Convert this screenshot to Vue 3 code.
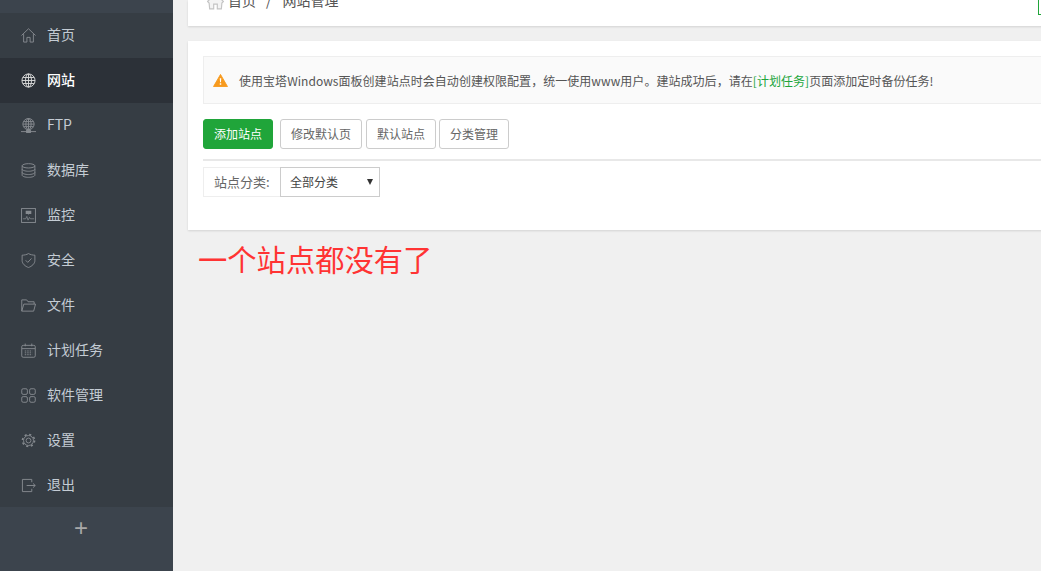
<script setup>
const items = [
  { label: '首页', icon: 'home' },
  { label: '网站', icon: 'globe', active: true },
  { label: 'FTP', icon: 'ftp' },
  { label: '数据库', icon: 'db' },
  { label: '监控', icon: 'monitor' },
  { label: '安全', icon: 'shield' },
  { label: '文件', icon: 'folder' },
  { label: '计划任务', icon: 'calendar' },
  { label: '软件管理', icon: 'grid' },
  { label: '设置', icon: 'gear' },
  { label: '退出', icon: 'exit' },
]
</script>

<template>
  <div class="page">
    <aside class="side">
      <div class="side-top"></div>
      <nav class="nav">
        <a v-for="it in items" :key="it.label" class="item" :class="{ active: it.active }">
          <svg class="ico" viewBox="0 0 16 16" fill="none" stroke="currentColor" stroke-width="1">
            <template v-if="it.icon === 'home'">
              <path d="M.5 8 8 .8 15.500 8M2.800 6.500V15H6.300V10H9.700V15H13.200V6.500" />
            </template>
            <template v-else-if="it.icon === 'globe'">
              <circle cx="8" cy="8" r="7" />
              <ellipse cx="8" cy="8" rx="3.200" ry="7" />
              <path d="M8 1V15M1 8H15M2.200 4.800H13.800M2.200 11.200H13.800" />
            </template>
            <template v-else-if="it.icon === 'ftp'">
              <circle cx="8" cy="6.500" r="6" />
              <ellipse cx="8" cy="6.500" rx="2.800" ry="6" />
              <path d="M8 .5V12.500M2 6.500H14M3 3.800H13M3 9.200H13M0 14.500H16" />
              <rect x="6" y="13" width="4" height="2.500" fill="currentColor" />
            </template>
            <template v-else-if="it.icon === 'db'">
              <ellipse cx="8" cy="3" rx="6.800" ry="2.300" />
              <path d="M1.200 3V13C1.200 14.300 4.500 15.300 8 15.300S14.800 14.300 14.800 13V3M1.200 6.500C1.200 7.800 4.500 8.800 8 8.800S14.800 7.800 14.800 6.500M1.200 10C1.200 11.300 4.500 12.300 8 12.300S14.800 11.300 14.800 10" />
            </template>
            <template v-else-if="it.icon === 'monitor'">
              <rect x=".6" y=".6" width="14.800" height="14.800" />
              <path d="M5 3H11V6.500H8.500L8 7.500 7.500 6.500H5Z" fill="currentColor" stroke="none" />
              <path d="M2 11.500H5L6.200 9 7.500 13 9 10 10 11.500H14" stroke-width=".8" />
            </template>
            <template v-else-if="it.icon === 'shield'">
              <path d="M8 .6C10 1.800 12.500 2.300 14.800 2.300V8C14.800 11.500 11.500 14.200 8 15.500 4.500 14.200 1.200 11.500 1.200 8V2.300C3.500 2.300 6 1.800 8 .6Z" />
              <path d="M5 7.800 7.200 10 11.200 5.800" />
            </template>
            <template v-else-if="it.icon === 'folder'">
              <path d="M.8 14V2H6L7.500 4H14V6.500M.8 14H13.500L15.500 6.500H3L.8 14Z" />
            </template>
            <template v-else-if="it.icon === 'calendar'">
              <rect x=".8" y="2.500" width="14.400" height="12.700" rx="1.500" />
              <path d="M1 6H15M4.500 .6V3.500M11.500 .6V3.500" />
              <path d="M4 8.500H12M4 10.500H12M4 12.500H12" stroke-dasharray="1.600 1" />
            </template>
            <template v-else-if="it.icon === 'grid'">
              <rect x=".8" y=".8" width="6" height="6" rx="1.500" />
              <rect x="9.200" y=".8" width="6" height="6" rx="1.500" />
              <rect x=".8" y="9.200" width="6" height="6" rx="1.500" />
              <rect x="9.200" y="9.200" width="6" height="6" rx="1.500" />
            </template>
            <template v-else-if="it.icon === 'gear'">
              <circle cx="8" cy="8" r="2.600" />
              <circle cx="8" cy="8" r="5.300" />
              <circle cx="8" cy="8" r="6.500" stroke-width="1.600" stroke-dasharray="2.300 2.800" />
            </template>
            <template v-else>
              <path d="M11.500 4.500V1.500H1.500V14.500H11.500V11.500M6 8H15.200M12.800 5.800 15.200 8 12.800 10.200" />
            </template>
          </svg>
          <span>{{ it.label }}</span>
        </a>
      </nav>
      <div class="side-add"><span>+</span></div>
    </aside>

    <main class="main">
      <section class="card crumb">
        <svg class="crumb-home" viewBox="0 0 16 16" fill="#f4f4f4" stroke="#c4c4c4" stroke-width="1.100">
          <path d="M.5 8 8 .8 15.500 8 14 9.500 13.500 15H9.700V10.500H6.300V15H2.500L2 9.500Z" />
        </svg>
        <span>首页</span>
        <span class="sep">/</span>
        <span>网站管理</span>
        <i class="green-mark"></i>
      </section>

      <section class="card panel">
        <div class="alert">
          <svg class="warn" viewBox="0 0 16 14">
            <path d="M8 0.500 15.500 13.500H.5Z" fill="#f79a1e" stroke="#f79a1e" stroke-linejoin="round" />
            <path d="M7.200 4.500H8.800L8.500 9H7.500ZM7.200 10H8.800V11.600H7.200Z" fill="#fff" />
          </svg>
          <span>使用宝塔Windows面板创建站点时会自动创建权限配置，统一使用www用户。建站成功后，请在<a class="link">[计划任务]</a>页面添加定时备份任务!</span>
        </div>
        <div class="buttons">
          <button class="btn primary">添加站点</button>
          <button class="btn wide">修改默认页</button>
          <button class="btn">默认站点</button>
          <button class="btn">分类管理</button>
        </div>
        <div class="filter">
          <span class="addon">站点分类:</span>
          <div class="select"><span>全部分类</span><i class="caret"></i></div>
        </div>
      </section>

      <p class="note">一个站点都没有了</p>
    </main>
  </div>
</template>

<style>
html, body { margin: 0; overflow: hidden; background: #f0f0f0; }
</style>

<style scoped>
.page {
  display: flex;
  width: 1041px;
  height: 571px;
  overflow: hidden;
  font-family: "Noto Sans CJK SC", "Noto Sans", sans-serif;
  font-size: 12px;
  color: #555;
}
.side {
  width: 173px;
  flex: none;
  display: flex;
  flex-direction: column;
  background: #363d44;
}
.side-top { height: 13px; background: #3c444d; }
.nav { display: flex; flex-direction: column; }
.item {
  height: 45px;
  box-sizing: border-box;
  padding: 0 0 3px 21px;
  display: flex;
  align-items: center;
  gap: 11px;
  color: #c4ccd4;
  font-size: 14px;
}
.item .ico { width: 15px; height: 15px; color: #868b90; flex: none; margin-top: 2px; }
.item.active { background: #2c3138; color: #fff; font-weight: 500; }
.item.active .ico { color: #d8d8d8; }
.side-add {
  flex: 1;
  background: #3c444d;
  color: #a8a8a8;
  text-align: center;
  font-size: 24px;
  line-height: 42px;
  font-family: "Liberation Sans", sans-serif;
  margin-top: -1px;
  padding-right: 11px;
}
.main {
  flex: 1;
  min-width: 0;
  padding-left: 15px;
  display: flex;
  flex-direction: column;
}
.card {
  background: #fff;
  width: 900px;
  box-shadow: 0 1px 2px rgba(0, 0, 0, .12);
}
.crumb {
  height: 26px;
  flex: none;
  position: relative;
  overflow: hidden;
  display: flex;
  align-items: flex-end;
  padding: 0 0 16px 19px;
  box-sizing: border-box;
  font-size: 14px;
  line-height: 20px;
  color: #555;
}
.crumb-home { width: 17px; height: 17px; margin-right: 4px; flex: none; }
.sep { margin: 0 11px 0 10px; }
.green-mark {
  position: absolute;
  left: 850px;
  top: -9px;
  width: 20px;
  height: 24px;
  border: 1px solid #20a53a;
  box-sizing: border-box;
}
.panel {
  margin-top: 15px;
  height: 189px;
  flex: none;
  padding: 15px;
  box-sizing: border-box;
}
.alert {
  height: 48px;
  box-sizing: border-box;
  border: 1px solid #eee;
  background: #fafafa;
  display: flex;
  align-items: center;
  padding-left: 9px;
  gap: 11px;
  color: #555;
  white-space: nowrap;
  font-size: 12px;
  letter-spacing: .04px;
}
.warn { width: 15px; height: 13px; flex: none; }
.link { color: #20a53a; }
.buttons {
  display: flex;
  gap: 3px;
  margin-top: 15px;
  padding-bottom: 10px;
  border-bottom: 2px solid #e8e8e8;
}
.btn {
  height: 30px;
  padding: 0 10px 2px;
  font: inherit;
  font-size: 12px;
  background: #fff;
  color: #666;
  border: 1px solid #ccc;
  border-radius: 3px;
}
.btn.primary {
  background: #20a53a;
  color: #fff;
  border-color: #20a53a;
  margin-right: 4px;
}
.btn.wide { margin-right: 1px; }
.filter { display: flex; margin-top: 6px; }
.addon {
  height: 30px;
  width: 77px;
  box-sizing: border-box;
  border: 1px solid #eee;
  border-right: 0;
  padding: 0 0 1px 10px;
  display: flex;
  align-items: center;
  color: #666;
  background: #fff;
  font-size: 13px;
}
.select {
  width: 100px;
  height: 30px;
  box-sizing: border-box;
  border: 1px solid #ccc;
  display: flex;
  align-items: center;
  justify-content: space-between;
  padding: 0 6px 1px 9px;
  color: #444;
}
.caret {
  width: 0;
  height: 0;
  border-left: 3px solid transparent;
  border-right: 3px solid transparent;
  border-top: 6px solid #333;
}
.note {
  margin: 8px 0 0 10px;
  font-size: 29.3px;
  line-height: 40px;
  color: #f33;
}
</style>
